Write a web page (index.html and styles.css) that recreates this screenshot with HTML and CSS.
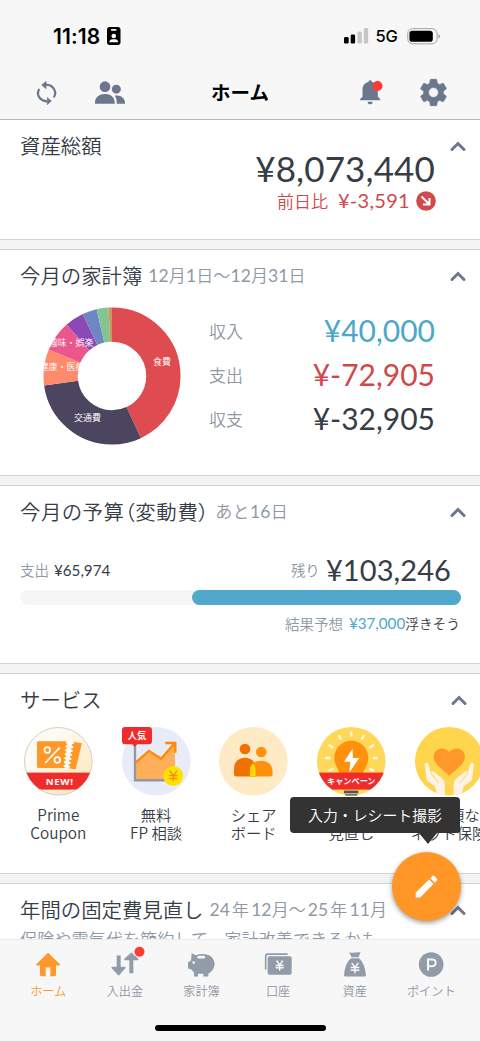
FILE: index.html
```html
<!DOCTYPE html>
<html lang="ja">
<head>
<meta charset="utf-8">
<title>ホーム</title>
<link rel="stylesheet" href="styles.css">
</head>
<body>
<div class="app">
  <header class="top">
    <div class="status">
      <span class="clock">11:18</span>
      <svg class="id-badge" viewBox="320 80 41 54"><rect x="320" y="80" width="41" height="54" rx="8"/><rect x="332" y="86" width="17" height="5" rx="2" fill="#f7f7f7"/><circle cx="340.500" cy="107" r="7" fill="#f7f7f7"/><path d="M327 126q1-9 9-9h9q8 0 9 9z" fill="#f7f7f7"/></svg>
      <svg class="signal" viewBox="312 84 73 46"><rect x="312" y="111" width="14" height="19" rx="4"/><rect x="332" y="103" width="13" height="27" rx="4"/><rect x="352" y="94" width="13" height="36" rx="4" fill="#c6c6c6"/><rect x="371" y="84" width="13" height="46" rx="4" fill="#c6c6c6"/></svg>
      <span class="net">5G</span>
      <svg class="battery" viewBox="500 82 101 50"><rect x="502" y="84" width="89" height="46" rx="15" fill="none" stroke="#a2a2a2" stroke-width="3"/><rect x="507" y="90" width="71" height="34" rx="9"/><path d="M595 100q5 2 5 7t-5 7z" fill="#a2a2a2"/></svg>
    </div>
    <nav class="nav">
      <div class="nav-side">
        <svg class="sync" viewBox="108 241 62 72"><g fill="none" stroke="#6b778d" stroke-width="6.500" stroke-linecap="round"><path d="M116 267C108 284 120 300 139 302M138 252C159 253 171 272 162 288"/></g><path d="M124 253L138 242V265Z M154 301L141 290V313Z" fill="#6b778d" stroke="#6b778d" stroke-width="1"/></svg>
        <svg class="people" viewBox="285 243 90 69"><g fill="#6b778d"><circle cx="315" cy="260" r="16"/><circle cx="349" cy="267.500" r="13.500"/><path d="M285 311V307C285 292 298 282 315 282S344 292 344 307V311Z"/><path d="M350 311V305C350 298 348 292 344 287C362 283 375 295 375 308V311Z"/></g></svg>
      </div>
      <h1 class="nav-title">ホーム</h1>
      <div class="nav-side right">
        <svg class="bell" viewBox="360 241 68 75"><path fill="#6b778d" d="M382 306H398Q397 314 390 314T382 306ZM360 302V298L367 291V270C367 258 374 249 385 247V246Q385 242 390 242T395 246V247C406 249 413 258 413 270V291L420 298V302Z"/><circle cx="412" cy="259" r="15" fill="#ff3a30"/></svg>
        <svg class="gear" viewBox="0 0 24 24"><path fill="#6b778d" stroke="#6b778d" stroke-width=".5" d="M19.140 12.940c.04-.3.06-.61.06-.94 0-.32-.02-.64-.07-.94l2.030-1.580c.18-.14.23-.41.12-.61l-1.920-3.320c-.12-.22-.37-.29-.59-.22l-2.390.96c-.5-.38-1.030-.7-1.620-.94l-.36-2.540c-.04-.24-.24-.41-.48-.41h-3.840c-.24 0-.43.17-.47.41l-.36 2.540c-.59.24-1.130.57-1.620.94l-2.390-.96c-.22-.08-.47 0-.59.22L2.740 8.870c-.12.21-.08.47.12.61l2.030 1.580c-.05.3-.09.63-.09.94s.02.64.07.94l-2.030 1.580c-.18.14-.23.41-.12.61l1.920 3.320c.12.22.37.29.59.22l2.390-.96c.5.38 1.030.7 1.620.94l.36 2.540c.05.24.24.41.48.41h3.840c.24 0 .44-.17.47-.41l.36-2.540c.59-.24 1.130-.56 1.620-.94l2.390.96c.22.08.47 0 .59-.22l1.920-3.320c.12-.22.07-.47-.12-.61l-2.010-1.580zM12 15.600c-1.980 0-3.600-1.620-3.600-3.600s1.620-3.600 3.600-3.600 3.600 1.620 3.600 3.600-1.620 3.600-3.600 3.600z"/></svg>
      </div>
    </nav>
  </header>

  <main class="feed">
    <section class="card assets">
      <div class="card-head"><h2>資産総額</h2><svg class="chev" viewBox="0 0 16 11"><path d="M2 8.500L8 2.500L14 8.500"/></svg></div>
      <div class="total num">¥8,073,440</div>
      <div class="diff"><span>前日比</span><span class="num diff-num">¥-3,591</span><svg class="diff-icon" viewBox="0 0 20 20"><circle cx="10" cy="10" r="9.800" fill="#d04a4d"/><path d="M5.500 5.500L13 13M13.500 7V13.500H7" fill="none" stroke="#fff" stroke-width="2"/></svg></div>
    </section>

    <section class="card budget-book">
      <div class="card-head"><h2>今月の家計簿</h2><span class="sub period"><i>12</i>月<i>1</i>日〜<i>12</i>月<i>31</i>日</span><svg class="chev" viewBox="0 0 16 11"><path d="M2 8.500L8 2.500L14 8.500"/></svg></div>
      <div class="book-body">
        <svg class="donut" viewBox="-69 -69 138 138">
          <g fill="none" stroke-width="34.300" transform="rotate(-90)">
            <circle r="51.400" pathLength="360" stroke="#de4b50" stroke-dasharray="155 360"/>
            <circle r="51.400" pathLength="360" stroke="#4b455f" stroke-dasharray="107 360" stroke-dashoffset="-155"/>
            <circle r="51.400" pathLength="360" stroke="#ff8a6c" stroke-dasharray="30.700 360" stroke-dashoffset="-262"/>
            <circle r="51.400" pathLength="360" stroke="#ec568f" stroke-dasharray="25.900 360" stroke-dashoffset="-292.700"/>
            <circle r="51.400" pathLength="360" stroke="#8c48b5" stroke-dasharray="16.100 360" stroke-dashoffset="-318.600"/>
            <circle r="51.400" pathLength="360" stroke="#6e86c1" stroke-dasharray="12.300 360" stroke-dashoffset="-334.700"/>
            <circle r="51.400" pathLength="360" stroke="#83c590" stroke-dasharray="10 360" stroke-dashoffset="-347"/>
            <circle r="51.400" pathLength="360" stroke="#cf955c" stroke-dasharray="3 360" stroke-dashoffset="-357"/>
          </g>
          <g class="slice-text"><text x="50" y="-11.500">食費</text><text x="-24.500" y="45">交通費</text><text x="-41" y="-30">趣味・娯楽</text><text x="-50" y="-6.500">健康・医療</text></g>
        </svg>
        <dl class="sums">
          <div><dt>収入</dt><dd class="num blue">¥40,000</dd></div>
          <div><dt>支出</dt><dd class="num red">¥-72,905</dd></div>
          <div><dt>収支</dt><dd class="num">¥-32,905</dd></div>
        </dl>
      </div>
    </section>

    <section class="card budget">
      <div class="card-head"><h2 class="tight">今月の予算（変動費）</h2><span class="sub days">あと<i>16</i>日</span><svg class="chev" viewBox="0 0 16 11"><path d="M2 8.500L8 2.500L14 8.500"/></svg></div>
      <div class="budget-row"><span class="muted">支出</span><span class="num spent">¥65,974</span><span class="muted rest">残り</span><span class="num left">¥103,246</span></div>
      <div class="bar"><div class="fill" style="width:61.100%"></div></div>
      <div class="forecast"><span class="muted">結果予想</span><span class="num blue">¥37,000</span><span>浮きそう</span></div>
    </section>

    <section class="card services">
      <div class="card-head"><h2>サービス</h2><svg class="chev" viewBox="0 0 16 11"><path d="M2 8.500L8 2.500L14 8.500"/></svg></div>
      <div class="service-list">
        <div class="service">
          <svg viewBox="73 139 206 206">
            <defs><linearGradient id="cream" x1="0" y1="0" x2="1" y2="1"><stop offset=".3" stop-color="#fffaf2"/><stop offset="1" stop-color="#ffe4b0"/></linearGradient><clipPath id="disc1"><circle cx="176" cy="242" r="101"/></clipPath></defs>
            <circle cx="176" cy="242" r="101.500" fill="url(#cream)" stroke="#cfcfcf" stroke-width="3"/>
            <path d="M116 182H203L195 262H116Q112 262 112 258V186Q112 182 116 182Z" fill="#ff9829"/>
            <path d="M219 183L247 188L228 267L205 262Z" fill="#ff9829"/>
            <path d="M204 182L196 264M219 184L206 264" stroke="#fffaf2" stroke-width="9" stroke-dasharray="6 6"/><path d="M212 180L201 266" stroke="#fffaf2" stroke-width="8"/>
            <g fill="none" stroke="#fff" stroke-width="5"><circle cx="143" cy="208" r="8.500"/><circle cx="173" cy="238" r="8.500"/><path d="M180 201L137 247"/></g>
            <rect x="73" y="276" width="206" height="51" fill="#ef2b2b" clip-path="url(#disc1)"/>
            <text x="180" y="313" class="ribbon-new">NEW!</text>
          </svg><p>Prime<br>Coupon</p></div>
        <div class="service">
          <svg viewBox="366 139 206 206"><circle cx="469" cy="242" r="103" fill="#e8ebf8"/><path d="M407 241L448 209L484 232L525 190V296H407Z" fill="#ffae59"/><path d="M405 180V299H525" fill="none" stroke="#9297a3" stroke-width="7"/><path d="M407 246L447 211L484 234L524 188M496 187H526V216" fill="none" stroke="#ff8909" stroke-width="7"/><circle cx="520" cy="286" r="30" fill="#ffe100"/><path d="M509 270L520 286L531 270M520 286V302M507 285H533M507 294H533" fill="none" stroke="#ef9110" stroke-width="4"/><path d="M375 139H447Q456 139 456 148V182Q456 191 447 191H412L404 198L397 191H375Q366 191 366 182V148Q366 139 375 139Z" fill="#ef2b2b"/><text x="411" y="175" class="popular">人気</text></svg>
          <p>無料<br>FP 相談</p></div>
        <div class="service">
          <svg viewBox="-61 139 206 206"><circle cx="42" cy="242" r="103" fill="#ffeac6"/><circle cx="17" cy="205" r="16" fill="#ed7200"/><path d="M-9 288Q-16 288-16 281V265C-16 243-2 231 17 231S49 243 49 265V288Z" fill="#ed7200"/><circle cx="66" cy="214" r="16" fill="#ff910d"/><path d="M32 288V271C32 251 46 240 66 240S100 252 100 274V282Q100 288 93 288Z" fill="#ff910d"/><path d="M41 248Q49 256 49 270V288H32V271Q32 256 41 248Z" fill="#ffd600"/></svg>
          <p>シェア<br>ボード</p></div>
        <div class="service">
          <svg viewBox="233 139 206 206"><defs><clipPath id="disc2"><circle cx="336" cy="242" r="103"/></clipPath></defs><circle cx="336" cy="242" r="103" fill="#ffd85a"/><path d="M336 180C307 180 285 203 285 232C285 254 299 265 302 282H370C373 265 387 254 387 232C387 203 365 180 336 180Z" fill="#ff910d"/><path d="M340 204L314 243H333L330 276L360 232H341Z" fill="#fff"/><g stroke="#fff8dd" stroke-width="7" stroke-linecap="round"><path d="M336 155V165M299 166L304 174M373 166L368 174M270 194L279 200M402 194L393 200M260 232H270M403 232H413M270 270L280 265M402 270L392 265"/></g><rect x="233" y="276" width="206" height="51" fill="#ef2b2b" clip-path="url(#disc2)"/><rect x="314" y="330" width="43" height="8" fill="#4c5668"/><rect x="318" y="341" width="36" height="4" fill="#4c5668"/><text x="336" y="311" class="campaign">キャンペーン</text></svg>
          <p>電気代<br>見直し</p></div>
        <div class="service">
          <svg viewBox="526 139 206 206"><defs><clipPath id="disc3"><circle cx="629" cy="242" r="103"/></clipPath></defs><circle cx="629" cy="242" r="103" fill="#ffd54d"/><path d="M629 286C620 274 582 253 582 229C582 202 615 195 629 214C643 195 676 202 676 229C676 253 638 274 629 286Z" fill="#ff982c"/><g clip-path="url(#disc3)"><g id="hand"><path d="M555 250Q562 242 567 252L574 277Q574 270 582 273L608 294Q616 301 616 312V350H594L586 318L561 299Z" fill="#fff2e6"/><path d="M573 277L598 308" stroke="#ffd54d" stroke-width="3"/></g><use href="#hand" transform="translate(1258 0) scale(-1 1)"/></g></svg>
          <p>お手頃な<br>ネット保険</p></div>
      </div>
    </section>

    <section class="card yearly">
      <div class="card-head"><h2>年間の固定費見直し</h2><span class="sub range"><i>24</i><b></b>年<b></b><i>12</i>月〜<b></b><i>25</i><b></b>年<b></b><i>11</i>月</span><svg class="chev" viewBox="0 0 16 11"><path d="M2 8.500L8 2.500L14 8.500"/></svg></div>
      <p class="desc">保険や電気代を節約して、家計改善できるかも</p>
    </section>
  </main>

  <footer class="tabs">
    <div class="tab active"><svg viewBox="108 308 72 74"><path d="M144 310L180 344Q181 348 176 348H168V376Q168 380 164 380H151V354H137V380H124Q120 380 120 376V348H112Q107 348 109 344Z" fill="#ff982a"/></svg><span>ホーム</span></div>
    <div class="tab"><svg viewBox="338 308 72 74"><path d="M349 318H361V352H374Q377 353 375 356L355 379L334 356Q332 353 335 352H349ZM387 371H399V332H413Q416 331 414 328L393 309L372 328Q370 331 373 332H387Z" fill="#929ba8"/><circle cx="417.500" cy="306.500" r="15" fill="#ff3a30"/></svg><span>入出金</span></div>
    <div class="tab"><svg viewBox="568 308 72 74"><path d="M576 311L589 317Q603 311 621 315C635 318 645 330 645 345Q645 355 635 366L626 373V381H611V373H595V381H583V369L574 359L565 357V338L574 333Z" fill="#929ba8"/><rect x="593" y="319" width="23" height="8" rx="4" fill="#f7f7f7"/><circle cx="582" cy="339" r="4" fill="#f7f7f7"/></svg><span>家計簿</span></div>
    <div class="tab"><svg viewBox="79 308 72 74"><path d="M78 360V321Q78 314 85 314H144" fill="none" stroke="#929ba8" stroke-width="5"/><rect x="84" y="320" width="72" height="56" rx="6" fill="#929ba8"/><path d="M111 333L120 348L129 333M120 347V364M108 348H132M108 355H132" fill="none" stroke="#f7f7f7" stroke-width="4.500"/></svg><span>口座</span></div>
    <div class="tab"><svg viewBox="309 308 72 74"><path d="M327 308Q336 311 345 309L362 308L355 323H335ZM333 326H357Q374 339 378 378Q378 381 374 381H316Q312 381 312 377Q315 340 333 326Z" fill="#929ba8"/><path d="M335 340L345 354L355 340M345 354V371M332 354H358M332 362H358" fill="none" stroke="#f7f7f7" stroke-width="4.500"/></svg><span>資産</span></div>
    <div class="tab"><svg viewBox="538 308 72 74"><circle cx="574.500" cy="345" r="37" fill="#929ba8"/><path d="M565 363V330H577Q588 330 588 340T577 350H565" fill="none" stroke="#f7f7f7" stroke-width="6"/></svg><span>ポイント</span></div>
    <div class="home-bar"></div>
  </footer>

  <div class="tooltip">入力・レシート撮影</div>
  <div class="fab"><svg viewBox="0 0 24 24"><path fill="#fff" d="M3 17.250V21h3.750L17.810 9.940l-3.750-3.750L3 17.250zM20.710 7.040c.39-.39.39-1.020 0-1.410l-2.340-2.340c-.39-.39-1.020-.39-1.410 0l-1.830 1.830 3.750 3.750 1.830-1.830z"/></svg></div>
</div>
</body>
</html>
```
FILE: styles.css
```css
* { box-sizing: border-box; }
body { margin: 0; font-family: "Noto Sans CJK JP", sans-serif; color: #363d46; font-weight: 350; }
h1, h2, p, dl, dd { margin: 0; font-weight: inherit; }
svg { display: block; overflow: visible; flex: none; }
i { font-style: normal; font-family: Lato, sans-serif; font-weight: 400; }
.num { font-family: Lato, sans-serif; font-weight: 400; }
.app { position: relative; width: 480px; height: 1041px; overflow: hidden; display: flex; flex-direction: column; background: #f2f3f5; }
.blue { color: #4da7cb; }
.red { color: #d0484b; }
.muted { color: #8f98a5; }

.top { height: 119px; flex: none; background: #f7f7f7; }
.status { height: 60px; padding: 12px 40px 0 53px; display: flex; align-items: center; color: #000; }
.clock { width: 54px; font: 600 21px Inter, sans-serif; letter-spacing: .1px; white-space: nowrap; }
.id-badge { width: 13.500px; height: 18px; }
.signal { width: 24.500px; height: 15.500px; margin-left: auto; }
.net { width: 38px; padding-left: 7px; font: 500 16.500px Inter, sans-serif; letter-spacing: -.2px; }
.battery { width: 33.500px; height: 16.500px; }
.nav { height: 59px; padding-top: 6px; display: flex; align-items: center; }
.nav-side { width: 125px; padding-left: 36px; display: flex; align-items: center; gap: 38px; }
.nav-side.right { padding-left: 5px; gap: 34px; }
.sync { width: 21px; height: 24px; }
.people { width: 30px; height: 23px; }
.nav-title { flex: 1; margin-top: -2px; text-align: center; font-size: 19.500px; font-weight: 700; line-height: 24px; color: #000; }
.bell { width: 23px; height: 25px; }
.gear { width: 33px; height: 33px; }

.feed { flex: 1; min-height: 0; overflow: hidden; display: flex; flex-direction: column; gap: 9px; }
.card { flex: none; background: #fff; border: solid #d0d2d5; border-width: 1px 0; }
.card-head { height: 52px; padding: 0 14px 0 20px; display: flex; align-items: center; white-space: nowrap; }
.card-head h2 { margin-top: -2px; font-size: 20.400px; line-height: 30px; }
.card-head .tight { font-feature-settings: "palt"; letter-spacing: .65px; }
.sub { margin: -2px 0 0 6px; font-size: 17px; line-height: 24px; color: #8f98a5; }
.sub i { font-size: 17.500px; }
.sub b { display: inline-block; width: 2px; }
.period { letter-spacing: .1px; }
.days { letter-spacing: .3px; }
.range { letter-spacing: .1px; }
.chev { width: 16px; height: 11px; margin-left: auto; }
.chev path { fill: none; stroke: #6b778d; stroke-width: 3; stroke-linecap: round; }

.assets { height: 121px; border-top-color: #b9babc; }
.total { margin-top: -25px; padding-right: 45px; text-align: right; font-size: 35px; line-height: 42px; letter-spacing: .15px; }
.diff { height: 22px; padding-right: 44px; display: flex; justify-content: flex-end; align-items: center; color: #d0484b; font-size: 17px; }
.diff-num { margin-left: 10px; font-size: 20px; letter-spacing: .3px; }
.diff-icon { width: 20px; height: 20px; margin: 1px 0 0 6px; }

.budget-book { height: 227px; }
.book-body { padding: 5px 45px 0 43px; display: flex; }
.donut { width: 138px; height: 138px; }
.slice-text text { font-size: 9px; font-weight: 350; fill: #fff; text-anchor: middle; }
.sums { flex: 1; padding: 1px 0 0 28px; }
.sums div { height: 44px; display: flex; align-items: center; justify-content: space-between; }
.sums dt { font-size: 17px; color: #8f98a5; }
.sums dd { font-size: 30px; line-height: 44px; }

.budget { height: 179px; }
.budget-row { height: 59px; padding: 4px 29px 0 20px; display: flex; align-items: center; font-size: 14.500px; }
.spent { margin-left: 5px; font-size: 15.200px; }
.rest { margin-left: auto; }
.left { margin-left: 6px; font-size: 29px; letter-spacing: .1px; }
.bar { width: 441px; height: 15px; margin: -7px 0 0 20px; border-radius: 8px; background: #f6f6f6; display: flex; justify-content: flex-end; }
.fill { border-radius: 8px; background: #50a8cc; }
.forecast { height: 24px; margin-top: 6px; padding-right: 20px; display: flex; justify-content: flex-end; align-items: center; font-size: 14.500px; }
.forecast .num { margin-left: 6px; font-size: 15.200px; }
.forecast span:last-child { font-size: 13.700px; }

.services { height: 201px; }
.services .card-head { padding-right: 13px; }
.service-list { width: 490px; padding: 1px 0 0 9.500px; display: flex; }
.service { width: 97.700px; flex: none; display: flex; flex-direction: column; align-items: center; }
.service svg { width: 68.600px; height: 68.600px; }
.service p { margin-top: 9px; text-align: center; font-size: 15.300px; line-height: 18.700px; white-space: nowrap; }
.ribbon-new { font: 700 29px "Noto Sans", sans-serif; letter-spacing: 2px; fill: #fff; text-anchor: middle; }
.popular { font-size: 28px; font-weight: 700; fill: #fff; text-anchor: middle; }
.campaign { font-size: 24.500px; font-weight: 700; fill: #fff; text-anchor: middle; }

.yearly { height: 160px; }
.desc { padding-left: 20px; margin-top: -9px; font-size: 17.150px; line-height: 24px; color: #8f98a5; white-space: nowrap; }

.tabs { height: 102px; flex: none; padding: 12px 10px 0; display: flex; flex-wrap: wrap; align-content: flex-start; background: #f7f7f7; border-top: 1px solid #eaebec; }
.tab { width: 76.600px; display: flex; flex-direction: column; align-items: center; font-size: 12.200px; line-height: 18px; color: #8f98a5; }
.tab svg { width: 24px; height: 25px; margin-bottom: 5px; }
.tab.active { color: #ff982a; }
.home-bar { width: 171px; height: 6px; margin: 25px auto 0; border-radius: 3px; background: #000; }

.tooltip { position: absolute; left: 290px; top: 797px; width: 170px; height: 36px; border-radius: 4px; background: #333; color: #fff; font-size: 14.900px; line-height: 36px; text-align: center; white-space: nowrap; }
.tooltip::after { content: ""; position: absolute; left: 129px; top: 36px; border: solid transparent; border-width: 11px 9px 0; border-top-color: #333; }
.fab { position: absolute; left: 392px; top: 852px; width: 69px; height: 69px; border-radius: 50%; background: #ff9626; box-shadow: 0 2px 5px rgba(0,0,0,.4); display: flex; align-items: center; justify-content: center; }
.fab svg { width: 29px; height: 29px; margin-right: 1px; }
```
